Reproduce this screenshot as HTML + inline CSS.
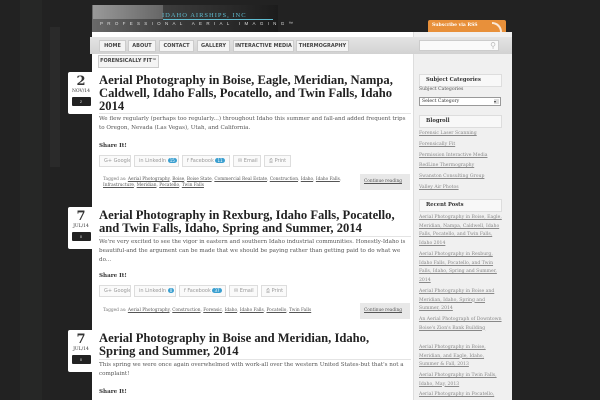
<!DOCTYPE html><html><head><style>
*{margin:0;padding:0;box-sizing:border-box}
html{width:600px;height:400px;overflow:hidden}
body{width:600px;height:400px;overflow:hidden;background:#222;font-family:"Liberation Serif",serif;position:relative}
.a{position:absolute}
.nav span{position:absolute;top:3px;height:12px;background:#f4f4f4;border:1px solid #ccc;font:bold 5px "DejaVu Sans",sans-serif;color:#444;text-align:center;line-height:10px;white-space:nowrap}
.badge{position:absolute;left:68px;width:26px;height:42px;background:#fff;border-radius:2px 0 0 2px;text-align:center}
.badge b{display:block;font:bold 13px "DejaVu Serif",serif;color:#333;margin-top:3px;line-height:13px}
.badge i{display:block;font:normal 4.5px "DejaVu Serif",serif;color:#333;font-style:normal;margin-top:1px}
.badge u{display:block;margin:3px auto 0;width:19px;height:9px;background:#222;color:#ddd;font:4px sans-serif;line-height:9px;text-decoration:none;border-radius:1px}
.t{position:absolute;left:99px;font:bold 12.6px/13px "Liberation Serif",serif;color:#222;width:320px;white-space:nowrap}
.ex{position:absolute;left:99px;font:5.6px/9px "DejaVu Serif",serif;color:#555;width:312px}
.sh{position:absolute;left:99px;font:bold 5.6px "DejaVu Serif",serif;color:#333}
.btn{position:absolute;height:12px;border:1px solid #ddd;background:#fafafa;font:5px/10px "DejaVu Sans",sans-serif;color:#999;padding-left:4px;white-space:nowrap;overflow:hidden}
.btn em{display:inline-block;background:#3a9fd0;color:#fff;border-radius:3px;padding:0 2px;font-style:normal;font-size:4px;line-height:5px}
.tags{position:absolute;left:99px;width:311px;height:16px;background:#fff;font:4.3px/6px "DejaVu Serif",serif;color:#777;padding:3px 4px}
.tags a{color:#555;text-decoration:underline}
.tags .cr{position:absolute;right:0;top:0;width:50px;height:16px;background:#e8e8e8;color:#555;text-decoration:underline;padding:5px 4px;white-space:nowrap}
.hd{position:absolute;left:419px;width:83px;height:13px;background:#f8f8f8;border:1px solid #ddd;font:bold 5.2px/11px "DejaVu Serif",serif;color:#333;padding-left:6px}
.sl{position:absolute;left:419px;font:4.6px/8.5px "DejaVu Serif",serif;color:#888;text-decoration:underline;width:84px}
.hr{position:absolute;left:99px;width:312px;height:1px;background:#e4e4e4}
</style></head><body>
<div class="a" style="left:20px;top:0;width:22px;height:400px;background:#262726"></div>
<div class="a" style="left:50px;top:27px;width:10px;height:140px;background:#2a2a2a"></div>
<div class="a" style="left:92px;top:5px;width:186px;height:27px;background:linear-gradient(90deg,#6a6a6a,#3c3c3c 40%,#1c1c1c)"></div>
<div class="a" style="left:93px;top:5px;width:70px;height:14px;background:linear-gradient(90deg,#999,#666)"></div>
<div class="a" style="left:162px;top:12px;font:6.5px 'Liberation Serif',serif;letter-spacing:1px;color:#5fbcd0;white-space:nowrap">IDAHO AIRSHIPS, INC</div>
<div class="a" style="left:163px;top:19px;width:110px;height:1px;background:#5fbcd0"></div>
<div class="a" style="left:100px;top:21px;font:4.5px 'Liberation Sans',sans-serif;letter-spacing:4.3px;color:#ddd;white-space:nowrap">PROFESSIONAL AERIAL IMAGING™</div>
<div class="a" style="left:428px;top:20px;width:78px;height:12px;background:#e8903a;border-radius:2px 2px 0 0;font:bold 4.5px/12px 'DejaVu Serif',serif;color:#fff;padding-left:4px">Subscribe via RSS</div>
<div class="a" style="left:492px;top:22px;width:10px;height:10px;border-top:2px solid #fff;border-right:2px solid #fff;border-radius:0 10px 0 0;opacity:.8"></div>
<div class="a" style="left:92px;top:32px;width:321px;height:368px;background:#fff"></div>
<div class="a" style="left:413px;top:32px;width:99px;height:368px;background:#f0f0f0;border-left:1px solid #ddd;overflow:hidden"></div>
<div class="a nav" style="left:90px;top:37px;width:422px;height:17px;background:linear-gradient(#e4e4e4,#d2d2d2)">
<span style="left:9px;width:27px">HOME</span><span style="left:38px;width:28px">ABOUT</span><span style="left:69px;width:35px">CONTACT</span><span style="left:107px;width:33px">GALLERY</span><span style="left:143px;width:61px">INTERACTIVE MEDIA</span><span style="left:206px;width:53px">THERMOGRAPHY</span>
<div style="position:absolute;left:329px;top:3px;width:80px;height:11px;background:#fafafa;border:1px solid #ccc;color:#bbb;font:8px sans-serif;text-align:right;padding-right:2px;line-height:9px">⚲</div></div>
<div class="a nav" style="left:90px;top:52px;width:80px;height:17px"><span style="left:8px;width:61px;height:13px;background:#f4f4f4">FORENSICALLY FIT™</span></div>

<div class="badge" style="top:72px"><b>2</b><i>NOV/14</i><u>2</u></div>
<div class="t" style="top:74px">Aerial Photography in Boise, Eagle, Meridian, Nampa,<br>Caldwell, Idaho Falls, Pocatello, and Twin Falls, Idaho<br>2014</div>
<div class="hr" style="top:113px"></div>
<div class="ex" style="top:115px">We flew regularly (perhaps too regularly...) throughout Idaho this summer and fall-and added frequent trips to Oregon, Nevada (Las Vegas), Utah, and California.</div>
<div class="sh" style="top:143px">Share It!</div>
<div class="btn" style="left:99px;top:155px;width:32px">G+ Google</div>
<div class="btn" style="left:134px;top:155px;width:45px">in LinkedIn <em>15</em></div>
<div class="btn" style="left:182px;top:155px;width:48px">f Facebook <em>11</em></div>
<div class="btn" style="left:233px;top:155px;width:28px">✉ Email</div>
<div class="btn" style="left:264px;top:155px;width:27px">⎙ Print</div>
<div class="tags" style="top:174px;width:311px;padding-right:58px">Tagged as: <a>Aerial Photography</a>, <a>Boise</a>, <a>Boise State</a>, <a>Commercial Real Estate</a>, <a>Construction</a>, <a>Idaho</a>, <a>Idaho Falls</a>, <a>Infrastructure</a>, <a>Meridian</a>, <a>Pocatello</a>, <a>Twin Falls</a><span class="cr">Continue reading</span></div>

<div class="badge" style="top:207px"><b>7</b><i>JUL/14</i><u>0</u></div>
<div class="t" style="top:209px">Aerial Photography in Rexburg, Idaho Falls, Pocatello,<br>and Twin Falls, Idaho, Spring and Summer, 2014</div>
<div class="hr" style="top:236px"></div>
<div class="ex" style="top:238px">We're very excited to see the vigor in eastern and southern Idaho industrial communities. Honestly-Idaho is beautiful-and the argument can be made that we should be paying rather than getting paid to do what we do...</div>
<div class="sh" style="top:273px">Share It!</div>
<div class="btn" style="left:99px;top:285px;width:32px">G+ Google</div>
<div class="btn" style="left:134px;top:285px;width:42px">in LinkedIn <em>0</em></div>
<div class="btn" style="left:179px;top:285px;width:47px">f Facebook <em>37</em></div>
<div class="btn" style="left:229px;top:285px;width:29px">✉ Email</div>
<div class="btn" style="left:261px;top:285px;width:26px">⎙ Print</div>
<div class="tags" style="top:303px;padding-top:5px">Tagged as: <a>Aerial Photography</a>, <a>Construction</a>, <a>Forensic</a>, <a>Idaho</a>, <a>Idaho Falls</a>, <a>Pocatello</a>, <a>Twin Falls</a><span class="cr" style="width:50px">Continue reading</span></div>

<div class="badge" style="top:330px"><b>7</b><i>JUL/14</i><u>0</u></div>
<div class="t" style="top:332px">Aerial Photography in Boise and Meridian, Idaho,<br>Spring and Summer, 2014</div>
<div class="hr" style="top:359px"></div>
<div class="ex" style="top:361px">This spring we were once again overwhelmed with work-all over the western United States-but that's not a complaint!</div>
<div class="sh" style="top:389px">Share It!</div>

<div class="hd" style="top:74px">Subject Categories</div>
<div class="sl" style="top:86px;text-decoration:none;color:#555">Subject Categories</div>
<div class="a" style="left:419px;top:97px;width:82px;height:9px;background:#fff;border:1px solid #999;font:4.6px/7px 'DejaVu Serif',serif;color:#333;padding-left:2px">Select Category<span style="position:absolute;right:1px;top:1px;width:5px;height:5px;background:#ddd;font-size:4px;line-height:5px">▾</span></div>
<div class="hd" style="top:115px">Blogroll</div>
<div class="sl" style="top:129px;line-height:10.8px">Forensic Laser Scanning<br>Forensically Fit<br>Permission Interactive Media<br>RedLine Thermography<br>Swanston Consulting Group<br>Valley Air Photos</div>
<div class="hd" style="top:199px">Recent Posts</div>
<div class="sl" style="top:214px">Aerial Photography in Boise, Eagle, Meridian, Nampa, Caldwell, Idaho Falls, Pocatello, and Twin Falls, Idaho 2014</div>
<div class="sl" style="top:251px">Aerial Photography in Rexburg, Idaho Falls, Pocatello, and Twin Falls, Idaho, Spring and Summer, 2014</div>
<div class="sl" style="top:288px">Aerial Photography in Boise and Meridian, Idaho, Spring and Summer, 2014</div>
<div class="sl" style="top:316px">An Aerial Photograph of Downtown Boise's Zion's Bank Building</div>
<div class="sl" style="top:344px">Aerial Photography in Boise, Meridian, and Eagle, Idaho, Summer &amp; Fall, 2013</div>
<div class="sl" style="top:372px;height:18px;overflow:hidden">Aerial Photography in Twin Falls, Idaho, May, 2013</div>
<div class="sl" style="top:391px;height:9px;overflow:hidden">Aerial Photography in Pocatello, Idaho Falls, and Rexburg, Idaho, May 2013</div>
</body></html>
